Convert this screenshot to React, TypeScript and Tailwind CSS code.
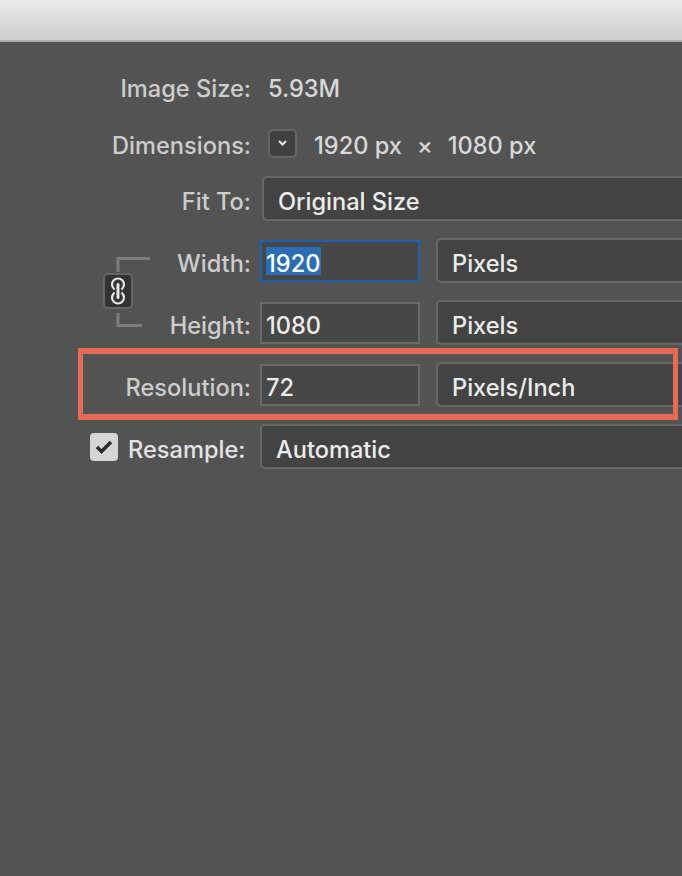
const font = "font-['Inter','Liberation_Sans',sans-serif]";

const Label = ({ children, width = 'w-[251px]' }: { children: string; width?: string }) => (
  <div className={`${width} shrink-0 flex justify-end whitespace-nowrap pt-[6px] text-[#cdcdcd]`}>{children}</div>
);

const Select = ({ value, x = 'ml-[11px] pl-[14px]' }: { value: string; x?: string }) => (
  <div className={`${x} h-[45px] flex-1 min-w-0 flex items-center rounded-l-[5px] rounded-r-none border-2 border-r-0 border-[#676767] bg-[#434343] pt-[7px] text-[#ececec]`}>
    {value}
  </div>
);

const UnitSelect = ({ value }: { value: string }) => (
  <div className="ml-[16px] h-[45px] flex-1 min-w-0 flex items-center rounded-l-[5px] border-2 border-r-0 border-[#676767] bg-[#434343] pl-[14px] pt-[7px] text-[#ececec]">
    {value}
  </div>
);

const NumberInput = ({ value }: { value: string }) => (
  <div className="ml-[9px] h-[42px] w-[160px] shrink-0 flex items-center border-2 border-[#696969] bg-[#474747] pl-[4px] pt-[6px] text-[#ececec]">
    {value}
  </div>
);

const LinkButton = () => (
  <div className="flex flex-col items-start pl-[103px] pt-[19px]">
    <svg width="50" height="15" viewBox="0 0 50 15" className="ml-[12px]" fill="none" stroke="#7d7d7d" strokeWidth="3">
      <path d="M3 15V1.500H35" />
    </svg>
    <div className="mt-[1px] flex h-[36px] w-[30px] items-center justify-center rounded-[5px] border-2 border-[#656565] bg-[#333333]">
      <svg width="20" height="28" viewBox="0 0 20 28" fill="none" stroke="#e6e6e6">
        <path d="M6.500 12.500C4.500 10.500 4 9 4 7.500A6 6 0 0 1 16 7.500C16 9 15.500 10.500 13.500 12.500" strokeWidth="2.200" />
        <path d="M6.500 15.500C4.500 17.500 4 19 4 20.500A6 6 0 0 0 16 20.500C16 19 15.500 17.500 13.500 15.500" strokeWidth="2.200" />
        <path d="M10 7.500V20.500" strokeWidth="3" strokeLinecap="round" />
      </svg>
    </div>
    <svg width="30" height="16" viewBox="0 0 30 16" className="ml-[12px] mt-[4px]" fill="none" stroke="#7d7d7d" strokeWidth="3">
      <path d="M3 0V12.500H27" />
    </svg>
  </div>
);

export default function App() {
  return (
    <div className={`${font} relative h-[876px] w-[682px] overflow-hidden bg-[#535353] text-[23.6px] font-medium leading-none antialiased`}>
      <div className="h-[42px] border-b-2 border-[#adadad] bg-gradient-to-b from-[#ececec] to-[#cdcdcd]" />

      <div className="flex flex-col pt-[22px]">
        <div className="flex h-[44px] items-center">
          <Label>Image Size:</Label>
          <div className="ml-[17px] pt-[6px] text-[#d8d8d8]">5.93M</div>
        </div>

        <div className="mt-[13px] flex h-[44px] items-center">
          <Label>Dimensions:</Label>
          <div className="ml-[17px] flex h-[29px] w-[29px] items-center justify-center rounded-[5px] border-2 border-[#666666] bg-[#404040]">
            <svg width="11" height="8" viewBox="0 0 11 8" fill="none" stroke="#e6e6e6" strokeWidth="2">
              <path d="M2 2L5.500 5.500L9 2" />
            </svg>
          </div>
          <div className="ml-[17px] pt-[6px] text-[#d8d8d8]">1920 px</div>
          <div className="ml-[15px] pt-[6px] text-[#d8d8d8]">×</div>
          <div className="ml-[15px] pt-[6px] text-[#d8d8d8]">1080 px</div>
        </div>

        <div className="mt-[11px] flex h-[45px] items-center">
          <Label>Fit To:</Label>
          <Select value="Original Size" />
        </div>

        <div className="mt-[17px] flex">
          <div className="w-[160px] shrink-0">
            <LinkButton />
          </div>
          <div className="flex min-w-0 flex-1 flex-col gap-[17px]">
            <div className="flex h-[45px] items-center">
              <Label width="w-[91px]">Width:</Label>
              <div className="ml-[9px] h-[42px] w-[160px] shrink-0 flex items-center border-2 border-[#1d5fb0] bg-[#474747] pl-[4px]">
                <span className="flex h-[28px] items-center bg-[#2a6db5] pr-[1px] pt-[6px] text-white">1920</span>
              </div>
              <UnitSelect value="Pixels" />
            </div>
            <div className="flex h-[45px] items-center">
              <Label width="w-[91px]">Height:</Label>
              <NumberInput value="1080" />
              <UnitSelect value="Pixels" />
            </div>
            <div className="flex h-[45px] items-center">
              <Label width="w-[91px]">Resolution:</Label>
              <NumberInput value="72" />
              <UnitSelect value="Pixels/Inch" />
            </div>
          </div>
        </div>

        <div className="mt-[17px] flex h-[45px] items-center pl-[90px]">
          <div className="flex h-[28px] w-[28px] shrink-0 items-center justify-center rounded-[4px] bg-[#d6d6d6]">
            <svg width="18" height="14" viewBox="0 0 18 14" fill="none" stroke="#2e2e2e" strokeWidth="3.500">
              <path d="M2 7L6.500 11.500L16 2" />
            </svg>
          </div>
          <div className="ml-[10px] w-[117px] shrink-0 whitespace-nowrap pt-[6px] text-[#e4e4e4]">Resample:</div>
          <Select value="Automatic" x="ml-[15px] pl-[14px]" />
        </div>
      </div>

      {/* annotation drawn over the form */}
      <div className="absolute left-[78px] top-[348px] h-[72px] w-[600px] border-x-[5px] border-y-[6px] border-[#e96a53]" />
    </div>
  );
}
